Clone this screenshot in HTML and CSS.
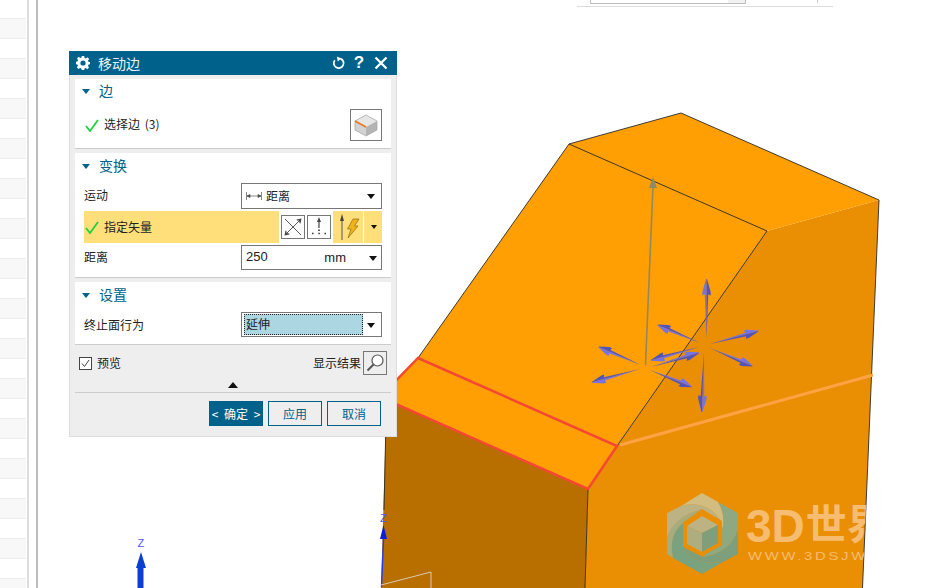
FILE: index.html
```html
<!DOCTYPE html>
<html lang="zh">
<head>
<meta charset="utf-8">
<title>移动边</title>
<link rel="stylesheet" href="styles.css">
</head>
<body>
<div class="app">
  <div class="sidebar"></div>
  <div class="rail"></div>
  <main class="canvas">
    <svg class="scene" viewBox="38 0 911 588" width="911" height="588" xmlns="http://www.w3.org/2000/svg">
      <defs>
        <clipPath id="rightFace"><polygon points="767,231 879,200 862.5,588 585,588 588,489 617,446"/></clipPath>
        <g id="arrow">
          <polygon points="0,0 37,-1.8 36,-4 39,-4.2 50,-0.5 50,0" fill="#7474e2"/>
          <polygon points="0,0 37,1.8 36,4.2 39,4.2 50,0.5 50,0" fill="#5454b8"/>
        </g>
      </defs>
      <!-- top strip -->
      <path class="strip-box" d="M590.5 0V3.5H745.5V0"/>
      <rect x="728" y="0" width="17" height="3" fill="#f2f2f2"/>
      <line class="strip-line" x1="577" y1="6.5" x2="833" y2="6.5"/>
      <line class="strip-tick" x1="817.5" y1="0" x2="817.5" y2="3"/>

      <!-- model -->
      <polygon fill="#b96f00" points="398,404 588,489 585,588 381,588 386,420"/>
      <polygon fill="#ea8e03" points="767,231 879,200 862.5,588 585,588 588,489 617,446"/>
      <polygon fill="#ff9f04" points="569,144 681,113 879,200 767,231 617,446 588,489 380,397 418,358"/>
      <path class="edge" d="M569 144L681 113L879 200L862.5 588M569 144L767 231L617 446M569 144L418 358M588 489L585 588M386 420L384 510"/>
      <line x1="620" y1="445" x2="873" y2="375" stroke="#ffa345" stroke-width="3"/>
      <path class="selected" d="M380 397L418 358L617 446L588 489L380 397"/>

      <!-- watermark -->
      <g clip-path="url(#rightFace)">
        <g class="logo">
          <path fill="#d3bc80" d="M681 506L702 493L718 502Q729 520 718 540L722 522L720 520Q707 500 681 506Z"/>
          <path fill="#8ea982" d="M718 502L738 513V530Q730 553 703 557L718 540Q729 520 718 502Z"/>
          <path fill="#7e9e7c" d="M738 530V554L723 562Q693 566 683 547L703 557Q730 553 738 530Z"/>
          <path fill="#7aa27e" d="M723 562L702 574L673 558Q668 535 683 523L683 547Q693 566 723 562Z"/>
          <path fill="#a5ad80" d="M673 558L667 554V538Q673 517 702 509L683 523Q668 535 673 558Z"/>
          <path fill="#bdb283" d="M667 538V513L681 506Q707 500 720 520L702 509Q673 517 667 538Z"/>
          <polygon fill="#ea8e03" points="702,510 722,521 722,545 702,556 683,545 683,522"/>
          <polygon fill="#bdb283" points="702,516 718,525 702,533 687,526"/>
          <polygon fill="#aead80" points="687,526 702,533 702,552 687,544"/>
          <polygon fill="#7f9e7c" points="718,525 702,533 702,552 718,543"/>
        </g>
        <text class="wm-big" x="746" y="542">3D<tspan class="wm-cjk" dx="1" dy="-3">世界</tspan></text>
        <text class="wm-small" transform="translate(748 560) scale(1.35 1)">WWW.3DSJW.COM</text>
      </g>

      <!-- vector -->
      <line x1="645.5" y1="365" x2="653" y2="186" stroke="#8f8a62" stroke-width="1.6"/>
      <polygon points="653,177 657,188 649,188" fill="#8f8a62"/>

      <!-- handles -->
      <use href="#arrow" transform="translate(706.5 338) rotate(-90) scale(1.18 1)"/>
      <use href="#arrow" transform="translate(704 352) rotate(92) scale(1.2 1)"/>
      <use href="#arrow" transform="translate(710 344) rotate(-15)"/>
      <use href="#arrow" transform="translate(710 348) rotate(23) scale(.92 1)"/>
      <use href="#arrow" transform="translate(700 343) rotate(203) scale(.92 1)"/>
      <use href="#arrow" transform="translate(699 347) rotate(164.5)"/>
      <use href="#arrow" transform="translate(641 365) rotate(203) scale(.92 1)"/>
      <use href="#arrow" transform="translate(640 369) rotate(164.5)"/>
      <use href="#arrow" transform="translate(651 367) rotate(-16.6)"/>
      <use href="#arrow" transform="translate(650 370) rotate(22) scale(.9 1)"/>

      <!-- triads -->
      <text class="axis" x="137.5" y="547">Z</text>
      <polygon fill="#0a3fd0" points="141,552 146,568 143.500,568 143.500,588 137.500,588 137.500,568 136,568"/>
      <text class="axis" x="380" y="522">Z</text>
      <polygon fill="#0a1fd8" points="383.500,525 387,539 380,539"/>
      <line x1="383.500" y1="539" x2="381.500" y2="587" stroke="#2a3af0" stroke-width="1.4"/>
      <path d="M381 585L431 572V588" fill="none" stroke="#d8c8b8" stroke-width="1"/>
    </svg>

    <section class="dialog">
      <header class="titlebar">
        <svg class="gear" viewBox="0 0 14 14" width="14" height="14"><path fill="#fff" fill-rule="evenodd" d="M5.800 0H8.200L8.600 1.900L9.900 2.400L11.500 1.300L13.200 3L12 4.600L12.600 5.900L14 6V8.200L12.500 8.600L12 9.900L13 11.500L11.300 13.200L9.800 12L8.500 12.600L8.200 14H5.800L5.400 12.500L4.100 12L2.500 13L0.800 11.300L2 9.800L1.400 8.500L0 8.200V5.800L1.500 5.400L2 4.100L1 2.500L2.700 0.800L4.200 2L5.500 1.400ZM7 4.400A2.600 2.600 0 1 0 7 9.600A2.600 2.600 0 1 0 7 4.400Z"/></svg>
        <h1 class="title">移动边</h1>
        <div class="title-tools">
          <svg viewBox="0 0 14 14" width="14" height="14"><path d="M8.500 2.600A4.900 4.900 0 1 1 2.800 4.200" fill="none" stroke="#fff" stroke-width="1.800"/><path d="M4.800 .6L9.400 2.600L5.800 5.400Z" fill="#fff"/></svg>
          <span class="help">?</span>
          <svg viewBox="0 0 14 14" width="14" height="14"><path d="M1.500 1.500L12.500 12.500M12.500 1.500L1.500 12.500" stroke="#fff" stroke-width="2.300"/></svg>
        </div>
      </header>
      <div class="dialog-body">
        <div class="panel panel-edge">
          <div class="section-head"><i class="caret"></i><span>边</span></div>
          <div class="row row-select">
            <svg class="check" viewBox="0 0 14 13" width="14" height="13"><path d="M1 7L5 12L13 1" fill="none" stroke="#22d03c" stroke-width="1.800"/></svg>
            <span class="label label-count">选择边 (3)</span>
            <button class="icon-btn icon-btn-big">
              <svg viewBox="0 0 26 26" width="26" height="26"><polygon points="13,3 24,9 13,15 2,9" fill="#e6e6e6"/><polygon points="2,9 13,15 13,24 2,18" fill="#d2d2d2"/><polygon points="24,9 13,15 13,24 24,18" fill="#b4b4b4"/><path d="M13 3L24 9V18L13 24L2 18V9Z" fill="none" stroke="#aaa" stroke-width=".8"/><path d="M2 9L13 15" stroke="#e8781c" stroke-width="1.500"/></svg>
            </button>
          </div>
        </div>

        <div class="panel panel-transform">
          <div class="section-head"><i class="caret"></i><span>变换</span></div>
          <div class="row">
            <span class="label">运动</span>
            <div class="select select-tall">
              <svg class="dist-icon" viewBox="0 0 16 8" width="16" height="8"><path d="M.5 0V8M15.500 0V8M1 4H15M1 4L4 2.500V5.500ZM15 4L12 2.500V5.500Z" fill="#444" stroke="#555" stroke-width=".7"/></svg>
              <span class="value">距离</span><i class="drop"></i>
            </div>
          </div>
          <div class="row row-vector">
            <div class="vector-bar">
              <svg class="check" viewBox="0 0 14 13" width="14" height="13"><path d="M1 7L5 12L13 1" fill="none" stroke="#22d03c" stroke-width="1.800"/></svg>
              <span class="label label-low">指定矢量</span>
            </div>
            <button class="icon-btn icon-btn-small">
              <svg viewBox="0 0 22 22" width="22" height="22"><path d="M3 19L19 3M3 3L19 19" stroke="#444" stroke-width=".9"/><path d="M19.500 2.500L14.500 3.500L15 4.500L17 4.500L17.500 7L18.500 7.500ZM2.500 19.500L3.500 14.500L4.500 15L4.500 17L7 17.500L7.500 18.500Z" fill="#444"/></svg>
            </button>
            <button class="icon-btn icon-btn-small">
              <svg viewBox="0 0 22 22" width="22" height="22"><path d="M11 3V12" stroke="#444" stroke-width="1.200"/><path d="M11 1L13 6H9Z" fill="#444"/><path d="M4 17.500H5.500M10.300 17.500H11.800M16.500 17.500H18M11 13.500V15" stroke="#333" stroke-width="1.600"/></svg>
            </button>
            <div class="vector-pick">
              <div class="pick-main">
                <svg viewBox="0 0 24 28" width="24" height="28"><path d="M6 6V27" stroke="#555" stroke-width="1"/><path d="M6 1L8 8H4Z" fill="#444"/><path d="M17 6H23L18.500 13H22L12 25L15 16H11.500Z" fill="#f2b21a" stroke="#8a6a20" stroke-width=".7"/></svg>
              </div>
              <div class="pick-drop"><i class="drop drop-small"></i></div>
            </div>
          </div>
          <div class="row row-dist">
            <span class="label">距离</span>
            <div class="select">
              <span class="value value-num">250</span>
              <span class="unit">mm</span><i class="drop drop-unit"></i>
            </div>
          </div>
        </div>

        <div class="panel panel-settings">
          <div class="section-head"><i class="caret"></i><span>设置</span></div>
          <div class="row">
            <span class="label label-low">终止面行为</span>
            <div class="select select-focus">
              <span class="focus-value">延伸</span><i class="drop"></i>
            </div>
          </div>
        </div>

        <div class="preview-row">
          <label class="preview">
            <svg class="checkbox" viewBox="0 0 13 13" width="13" height="13"><rect x=".5" y=".5" width="12" height="12" fill="#fff" stroke="#444"/><path d="M3 6.500L5.500 9.500L10 3" fill="none" stroke="#444" stroke-width="1"/></svg>
            <span class="label label-low">预览</span>
          </label>
          <div class="result">
            <span class="label label-low">显示结果</span>
            <button class="icon-btn icon-btn-result">
              <svg viewBox="0 0 20 20" width="20" height="20"><circle cx="12.500" cy="7.500" r="5.500" fill="#fff" stroke="#555" stroke-width="1.200"/><path d="M8.500 11.500L2.500 17.500" stroke="#555" stroke-width="2"/></svg>
            </button>
          </div>
        </div>
        <div class="collapse-row"><i class="collapse"></i></div>
        <div class="actions">
          <button class="btn btn-primary">&lt; 确定 &gt;</button>
          <button class="btn">应用</button>
          <button class="btn">取消</button>
        </div>
      </div>
    </section>
  </main>
</div>
</body>
</html>
```
FILE: styles.css
```css
* { box-sizing: border-box; }
html, body { margin: 0; padding: 0; background: #fff; }
body { font-family: "Noto Sans CJK SC", "Liberation Sans", sans-serif; font-size: 12px; color: #222; }

.app { display: flex; width: 949px; height: 588px; overflow: hidden; }
.sidebar {
  width: 29px; flex: none;
  border-right: 2px solid #ddd;
  background:
    linear-gradient(to right, transparent 26px, #fff 26px),
    repeating-linear-gradient(to bottom,
      #fff 0, #fff 18px,
      #ececec 18px, #ececec 19px,
      #f8f8f8 19px, #f8f8f8 38px,
      #ececec 38px, #ececec 39px,
      #fff 39px, #fff 40px);
}
.rail { width: 10px; flex: none; margin-left: -1px; border-right: 2px solid #bdbdbd; }
.canvas { position: relative; flex: 1; min-width: 0; }
.scene { display: block; }

.strip-box { fill: none; stroke: #bbb; stroke-width: 1; }
.strip-line { stroke: #ddd; stroke-width: 1; }
.strip-tick { stroke: #ccc; stroke-width: 1; }
.edge { fill: none; stroke: #2a2a2a; stroke-width: .9; }
.selected { fill: none; stroke: #f54734; stroke-width: 2.500; }
.wm-big { font-family: "Liberation Sans", sans-serif; font-weight: 700; font-size: 46px; fill: #f6bd70; }
.wm-cjk { font-family: "Noto Sans CJK SC", sans-serif; font-size: 41px; }
.wm-small { font-family: "Liberation Sans", sans-serif; font-size: 11px; letter-spacing: 2px; fill: #f6bd70; }
.axis { font-family: "Liberation Sans", sans-serif; font-size: 11px; fill: #4a5af0; }

.dialog {
  position: absolute; left: 31px; top: 51px;
  width: 328px; height: 386px;
  display: flex; flex-direction: column;
  background: #eee;
  border: 1px solid #ddd; border-top: 0;
}
.titlebar {
  height: 24px; flex: none; margin: 0 -1px;
  display: flex; align-items: center;
  padding: 0 9px 0 8px;
  background: #00618a; color: #fff;
}
.gear { flex: none; margin-left: -1px; }
.title { margin: 0 0 0 8px; font-size: 14px; font-weight: 400; line-height: 24px; color: #e6f2f7; flex: 1; }
.title-tools { display: flex; align-items: center; gap: 6px; }
.help { width: 14px; margin-right: 2px; text-align: center; font: 700 17px "Liberation Sans", sans-serif; }

.dialog-body { flex: 1; display: flex; flex-direction: column; padding: 4px 5px 0; }
.panel { background: #fff; border-bottom: 1px solid #ccc; padding: 0 9px; margin-bottom: 4px; }
.panel-edge { height: 70px; }
.panel-transform { height: 125px; }
.panel-settings { height: 63px; margin-bottom: 0; }

.section-head { display: flex; align-items: center; height: 26px; margin: 0 -2px; color: #00618a; font-size: 14px; }
.section-head span { margin-top: -2px; }
.panel-edge .section-head { height: 24px; }
.caret { width: 0; height: 0; margin-right: 9px; border: 4px solid transparent; border-top: 5px solid #00618a; border-bottom: 0; }

.row { display: flex; align-items: center; justify-content: space-between; margin-top: 4px; }
.row-select { margin-top: 6px; justify-content: flex-start; margin-left: 1px; }
.row-select .icon-btn { margin-left: auto; }
.row-vector { margin-top: 2px; height: 32px; gap: 2px; justify-content: flex-start; }
.row-dist { margin-top: 2px; }
.label { font-size: 12px; line-height: 16px; color: #222; white-space: nowrap; margin-top: -2px; }
.label-low { margin-top: 0; }
.label-count { word-spacing: 2px; }

.check { flex: none; margin-right: 5px; }
.icon-btn { padding: 0; border: 1px solid #777; background: #fff; display: flex; align-items: center; justify-content: center; }
.icon-btn-big { width: 32px; height: 32px; }
.icon-btn-small { width: 24px; height: 24px; flex: none; }
.icon-btn-result { width: 24px; height: 24px; margin-left: 2px; background: #eee; }
.icon-btn-small svg { display: block; }

.select { position: relative; width: 141px; height: 25px; border: 1px solid #777; background: #fff; display: flex; align-items: center; padding: 0 4px; flex: none; }
.select-tall { height: 26px; }
.dist-icon { margin-right: 4px; flex: none; }
.value { font-size: 12px; margin-top: -2px; }
.value-num { font: 13px "Liberation Sans", sans-serif; margin-top: -3px; }
.unit { font: 13px "Liberation Sans", sans-serif; margin-left: auto; margin-right: 31px; }
.drop { position: absolute; right: 6px; top: 50%; margin-top: -2px; width: 0; height: 0; border: 4px solid transparent; border-top: 5px solid #111; border-bottom: 0; }
.drop-unit { right: 4px; }

.vector-bar { width: 195px; height: 32px; background: #ffdf7a; display: flex; align-items: center; padding-left: 1px; flex: none; }
.vector-pick { width: 49px; height: 32px; margin-left: 0; display: flex; background: #ffdf7a; flex: none; }
.pick-main { width: 31px; display: flex; align-items: center; justify-content: center; border-right: 1px solid #fff; }
.pick-drop { position: relative; flex: 1; }
.drop-small { right: 5px; border-width: 3px; border-top-width: 4px; border-bottom: 0; }

.select-focus { padding: 0; }
.focus-value { width: 119px; height: 21px; margin-left: 2px; background: #add6e3; outline: 1px dotted #222; outline-offset: -1px; font-size: 12px; line-height: 19px; padding-left: 2px; }

.preview-row { display: flex; justify-content: space-between; align-items: center; width: 308px; height: 24px; margin: 6px 4px 0 4px; }
.preview, .result { display: flex; align-items: center; }
.checkbox { margin-right: 5px; }
.collapse-row { height: 18px; padding-top: 3px; border-bottom: 1px solid #ccc; display: flex; justify-content: center; align-items: center; }
.collapse { width: 0; height: 0; border: 5px solid transparent; border-bottom: 6px solid #111; border-top: 0; margin-left: -1px; }
.actions { display: flex; justify-content: flex-end; gap: 5px; margin-top: 8px; padding-right: 10px; }
.btn { width: 54px; height: 25px; padding: 0; border: 1px solid #00618a; background: #eee; color: #00618a; font: 12px "Noto Sans CJK SC", sans-serif; }
.btn-primary { background: #00618a; color: #fff; white-space: nowrap; word-spacing: 3px; }
```
